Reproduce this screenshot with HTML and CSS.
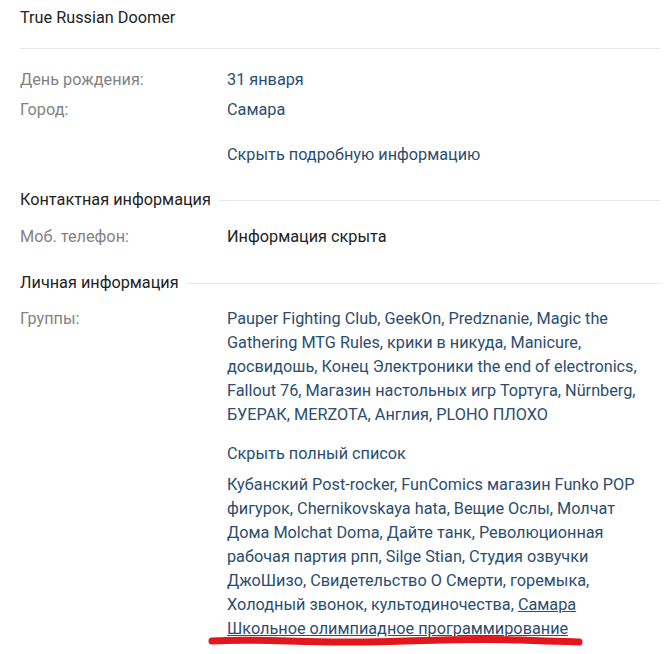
FILE: index.html
```html
<!DOCTYPE html>
<html lang="ru">
<head>
<meta charset="utf-8">
<link rel="stylesheet" href="styles.css">
</head>
<body>
<div class="profile">
  <div class="status">True Russian Doomer</div>
  <div class="divider"></div>
  <div class="row row-first"><div class="label">День рождения:</div><div class="value link">31 января</div></div>
  <div class="row row-next"><div class="label">Город:</div><div class="value link">Самара</div></div>
  <div class="row row-toggle"><div class="label"></div><div class="value link">Скрыть подробную информацию</div></div>
  <div class="section-head head-contact"><span>Контактная информация</span><span class="line"></span></div>
  <div class="row row-phone"><div class="label">Моб. телефон:</div><div class="value dark">Информация скрыта</div></div>
  <div class="section-head head-personal"><span>Личная информация</span><span class="line"></span></div>
  <div class="row row-groups"><div class="label">Группы:</div><div class="value link">Pauper Fighting Club, GeekOn, Predznanie, Magic the Gathering MTG Rules, крики в никуда, Manicure, досвидошь, Конец Электроники the end of electronics, Fallout 76, Магазин настольных игр Тортуга, Nürnberg, БУЕРАК, MERZOTA, Англия, PLOHO ПЛОХО</div></div>
  <div class="row row-hide"><div class="label"></div><div class="value link">Скрыть полный список</div></div>
  <div class="row row-more"><div class="label"></div><div class="value link more">Кубанский Post-rocker, FunComics магазин Funko POP фигурок, Chernikovskaya hata, Вещие Ослы, Молчат Дома Molchat Doma, Дайте танк, Революционная рабочая партия рпп, Silge Stian, Студия озвучки ДжоШизо, Свидетельство О Смерти, горемыка, Холодный звонок, культодиночества, <span class="hover">Самара Школьное олимпиадное программирование</span></div></div>
</div>
<svg class="scribble" width="667" height="654" viewBox="0 0 667 654">
  <path d="M212 641 C 260 638, 300 643, 360 642 S 470 638, 520 640 S 570 641, 579 642" fill="none" stroke="#e3161c" stroke-width="7" stroke-linecap="round"/>
</svg>
</body>
</html>
```

FILE: styles.css
```css
html, body {
  margin: 0;
  padding: 0;
  background: #ffffff;
}
body {
  font-family: Roboto, "Noto Sans", sans-serif;
  font-size: 16.25px;
  line-height: 24px;
  color: #222222;
  position: relative;
  width: 667px;
  height: 654px;
  overflow: hidden;
}
.profile {
  padding: 0 7px 0 20px;
}
.status {
  margin-top: 6px;
  color: #222222;
}
.divider {
  margin-top: 18px;
  height: 1px;
  background: #e7e8ec;
}
.row {
  display: flex;
}
.label {
  width: 207px;
  flex: none;
  color: #828282;
}
.value {
  flex: 1;
  padding-right: 15px;
}
.link {
  color: #2b4d70;
}
.dark {
  color: #222222;
}
.row-first { margin-top: 19px; }
.row-next { margin-top: 6px; }
.row-toggle { margin-top: 21px; }
.section-head {
  display: flex;
  align-items: center;
  color: #222222;
}
.section-head .line {
  flex: 1;
  height: 1px;
  background: #e7e8ec;
  margin-left: 8px;
}
.head-contact { margin-top: 21px; }
.row-phone { margin-top: 13px; }
.head-personal { margin-top: 22px; }
.row-groups { margin-top: 12px; }
.row-hide { margin-top: 15px; }
.row-more { margin-top: 7px; }
.hover {
  text-decoration: underline;
}
.scribble {
  position: absolute;
  left: 0;
  top: 0;
  pointer-events: none;
}
```
